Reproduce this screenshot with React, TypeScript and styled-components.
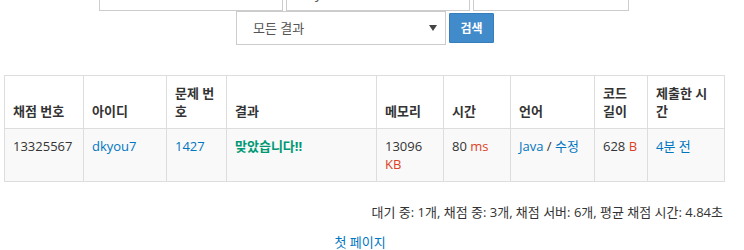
import React from 'react'
import styled, { createGlobalStyle } from 'styled-components'

const GlobalStyle = createGlobalStyle`
  html, body {
    margin: 0;
    padding: 0;
    background: #fff;
  }
  body {
    font-family: 'Open Sans', 'Noto Sans CJK KR', sans-serif;
    font-size: 13px;
    line-height: 1.42857;
    color: #333;
    overflow: hidden;
  }
`

const colors = {
  border: '#ddd',
  input: '#ccc',
  link: '#0076c0',
  accepted: '#009874',
  unit: '#dd4124',
  primary: '#428bca',
  primaryBorder: '#357ebd',
}

type Column = { title: string; width: number }

const columns: Column[] = [
  { title: '채점 번호', width: 79 },
  { title: '아이디', width: 83 },
  { title: '문제 번호', width: 60 },
  { title: '결과', width: 150 },
  { title: '메모리', width: 67 },
  { title: '시간', width: 67 },
  { title: '언어', width: 84 },
  { title: '코드 길이', width: 53 },
  { title: '제출한 시간', width: 77 },
]

export default function App() {
  return (
    <Page>
      <GlobalStyle />
      <SearchForm>
        <FormRow>
          <Field width={184}>1427</Field>
          <Field width={184}>dkyou7</Field>
          <Field width={156}>모든 언어</Field>
        </FormRow>
        <FormRow>
          <SelectBox>
            <span>모든 결과</span>
            <svg width="8" height="6" viewBox="0 0 8 6">
              <path d="M0 0 H8 L4 6 Z" fill="#444" />
            </svg>
          </SelectBox>
          <SearchButton>검색</SearchButton>
        </FormRow>
      </SearchForm>

      <StatusTable>
        <colgroup>
          {columns.map((c) => (
            <col key={c.title} style={{ width: c.width }} />
          ))}
        </colgroup>
        <thead>
          <tr>
            {columns.map((c) => (
              <Th key={c.title}>{c.title}</Th>
            ))}
          </tr>
        </thead>
        <tbody>
          <tr>
            <Td>13325567</Td>
            <Td>
              <Link>dkyou7</Link>
            </Td>
            <Td>
              <Link>1427</Link>
            </Td>
            <Td>
              <Result>맞았습니다!!</Result>
            </Td>
            <Td>
              13096 <Unit>KB</Unit>
            </Td>
            <Td>
              80 <Unit>ms</Unit>
            </Td>
            <Td>
              <Link>Java</Link> / <Link>수정</Link>
            </Td>
            <Td>
              628 <Unit>B</Unit>
            </Td>
            <Td>
              <Link>4분 전</Link>
            </Td>
          </tr>
        </tbody>
      </StatusTable>

      <Stats>
        대기 중: 1개, 채점 중: 3개, 채점 서버: 6개, 평균 채점 시간: 4.84초
      </Stats>

      <Pager>
        <Link>첫 페이지</Link>
      </Pager>
    </Page>
  )
}

const Page = styled.div`
  width: 720px;
  padding: 0 20px 0 4px;
`

const SearchForm = styled.div`
  margin-top: -23px;
  display: flex;
  flex-direction: column;
`

const FormRow = styled.div`
  display: flex;
  justify-content: center;
  align-items: center;
  gap: 3px;
`

const Field = styled.div<{ width: number }>`
  box-sizing: border-box;
  width: ${(p) => p.width}px;
  height: 34px;
  padding: 5px 12px;
  border: 1px solid ${colors.input};
  font-size: 14px;
  line-height: 20px;
  color: #555;
  background: #fff;
`

const SelectBox = styled.div`
  box-sizing: border-box;
  width: 210px;
  height: 34px;
  padding: 6px 8px 6px 16px;
  border: 1px solid ${colors.input};
  display: flex;
  align-items: center;
  justify-content: space-between;
  font-size: 13px;
  color: #555;
  background: #fff;
  margin-left: 2px;
`

const SearchButton = styled.button`
  box-sizing: border-box;
  width: 45px;
  height: 30px;
  padding: 0;
  background: ${colors.primary};
  border: 1px solid ${colors.primaryBorder};
  border-radius: 1px;
  color: #fff;
  font-family: inherit;
  font-size: 12px;
  font-weight: bold;
`

const StatusTable = styled.table`
  margin-top: 30px;
  width: 720px;
  table-layout: fixed;
  border-collapse: collapse;
  border: 1px solid ${colors.border};
`

const Th = styled.th`
  padding: 8px;
  border: 1px solid ${colors.border};
  text-align: left;
  vertical-align: bottom;
  font-weight: bold;
  line-height: 18px;
  background: #fff;
`

const Td = styled.td`
  padding: 8px;
  border: 1px solid ${colors.border};
  vertical-align: top;
  line-height: 18px;
  background: #f9f9f9;
`

const Link = styled.a`
  color: ${colors.link};
  text-decoration: none;
  cursor: pointer;
`

const Result = styled.span`
  color: ${colors.accepted};
  font-weight: bold;
`

const Unit = styled.span`
  color: ${colors.unit};
`

const Stats = styled.div`
  margin-top: 21px;
  text-align: right;
  padding-right: 1px;
`

const Pager = styled.div`
  margin-top: 11px;
  text-align: center;
  padding-right: 8px;
`
